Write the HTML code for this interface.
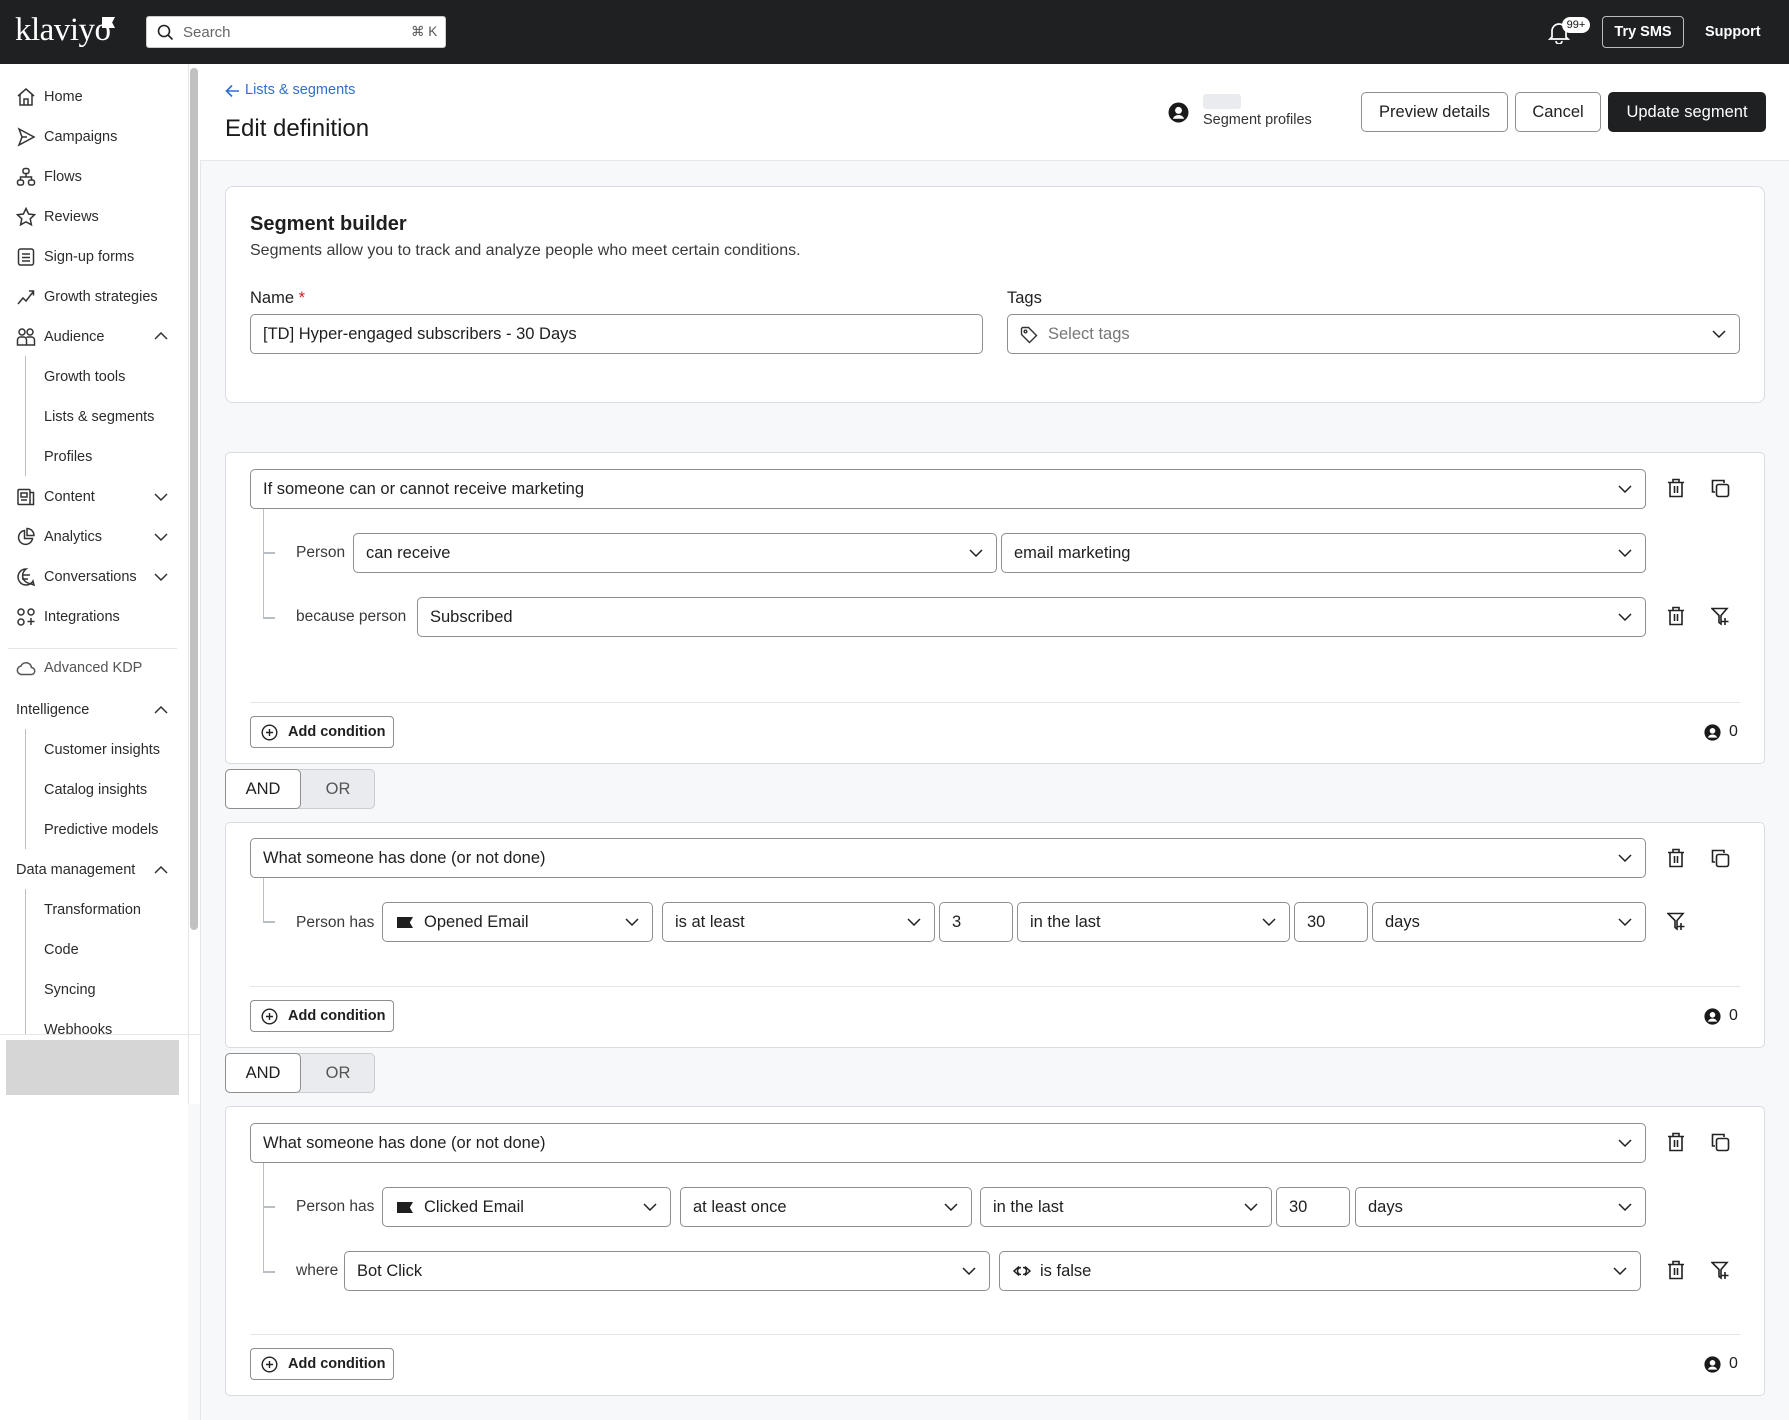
<!DOCTYPE html>
<html><head><meta charset="utf-8"><style>
*{box-sizing:border-box;margin:0;padding:0}
body{width:1789px;height:1420px;overflow:hidden;position:relative;background:#f7f8fa;font-family:"Liberation Sans",Arial,sans-serif;color:#1f1f1f}
.a{position:absolute}
.top{left:0;top:0;width:1789px;height:64px;background:#1f2022}
.side{left:0;top:64px;width:188px;height:1356px;background:#fff}
.sb{left:188px;top:64px;width:12px;height:1040px;background:#fff;border-left:1px solid #e6e6e6}
.thumb{left:190px;top:68px;width:8px;height:862px;background:#c1c1c1;border-radius:4px}
.ni{position:absolute;left:44px;font-size:14.5px;color:#2b2b2b;line-height:18px;margin-top:1px}
.ic{position:absolute;left:16px;margin-top:1px}
.hd{left:200px;top:64px;width:1589px;height:97px;background:#fff;border-bottom:1px solid #e5e7eb}
.card{background:#fff;border:1px solid #d9dce0;border-radius:8px}
.sel{position:absolute;border:1px solid #8e8e8e;border-radius:5px;background:#fff;height:40px;font-size:16.5px;padding-left:12px;line-height:38px;color:#1f1f1f;white-space:nowrap;overflow:hidden}
.sel svg.ch{position:absolute;right:13px;top:15px}
.lbl{position:absolute;font-size:15.5px;color:#3a3a3a;line-height:20px;margin-top:1px}
.btn{position:absolute;border:1px solid #8e8e8e;border-radius:5px;background:#fff;font-size:16.5px;text-align:center}
.add{position:absolute;left:250px;width:144px;height:32px;border:1px solid #8e8e8e;border-radius:4px;background:#fff;font-size:14.5px;font-weight:bold;line-height:30px;padding-left:37px}
.add svg{position:absolute;left:10px;top:7px}
.sep{position:absolute;left:250px;width:1490px;height:1px;background:#e3e5e8}
.cnt{position:absolute;left:1704px;font-size:16px;margin-top:1px}
.cnt svg{position:absolute;left:0;top:1px}
.cnt span{position:absolute;left:25px;top:0}
.ao{position:absolute;left:225px;width:150px;height:40px;border:1px solid #c9ccd1;border-radius:5px;background:#e9ebee;font-size:16.5px}
.ao .and{position:absolute;left:-1px;top:-1px;width:76px;height:40px;background:#fff;border:1px solid #8e8e8e;border-radius:5px;text-align:center;line-height:38px}
.ao .or{position:absolute;left:75px;top:0;width:74px;text-align:center;line-height:38px;color:#555}
.tl{position:absolute;border-left:1.5px solid #b9bec5}
.th{position:absolute;height:1.5px;background:#b9bec5;width:12px}
</style></head><body>

<div class="a top">
  <div class="a" style="left:15px;top:12px;font-family:'Liberation Serif',serif;font-size:33px;color:#fff;letter-spacing:-0.5px">klaviyo</div>
  <div class="a" style="left:102px;top:17px;width:13px;height:11px;background:#fff;clip-path:polygon(0 0,100% 0,78% 50%,100% 100%,0 100%)"></div>
  <div class="a" style="left:146px;top:16px;width:300px;height:32px;background:#fff;border:1px solid #ccc;border-radius:3px">
    <svg class="a" style="left:10px;top:7px" width="17" height="17" viewBox="0 0 17 17"><circle cx="7" cy="7" r="5.5" fill="none" stroke="#222" stroke-width="1.6"/><path d="M11 11l4.5 4.5" stroke="#222" stroke-width="1.6"/></svg>
    <span class="a" style="left:36px;top:7px;font-size:15px;color:#666">Search</span>
    <span class="a" style="left:264px;top:7px;font-size:13.5px;color:#555">⌘ K</span>
  </div>
  <svg class="a" style="left:1548px;top:20px" width="22" height="24" viewBox="0 0 22 24"><path d="M4 17V11a7 7 0 0 1 14 0v6l2 2H2z" fill="none" stroke="#fff" stroke-width="1.7"/><path d="M8 21a3 3 0 0 0 6 0" fill="none" stroke="#fff" stroke-width="1.7"/></svg>
  <div class="a" style="left:1562px;top:17px;width:28px;height:16px;background:#fff;border-radius:8px;font-size:11px;color:#111;text-align:center;line-height:16px">99+</div>
  <div class="a" style="left:1602px;top:16px;width:82px;height:32px;border:1px solid #bbb;border-radius:4px;color:#fff;font-size:14.5px;font-weight:bold;text-align:center;line-height:31px">Try SMS</div>
  <div class="a" style="left:1705px;top:24px;color:#fff;font-size:14.5px;font-weight:bold">Support</div>
</div>

<div class="a side"></div>
<div class="a sb"></div>
<div class="a thumb"></div>
<svg class="ic" style="top:86px" width="20" height="20" viewBox="0 0 20 20" fill="none" stroke="#333" stroke-width="1.5"><path d="M2 9l8-7 8 7M4 7.5V18h12V7.5M8 18v-6h4v6"/></svg>
<div class="ni" style="top:87px">Home</div>
<svg class="ic" style="top:126px" width="20" height="20" viewBox="0 0 20 20" fill="none" stroke="#333" stroke-width="1.5"><path d="M3 2l15 8-15 8 3-8z M6 10h5"/></svg>
<div class="ni" style="top:127px">Campaigns</div>
<svg class="ic" style="top:166px" width="20" height="20" viewBox="0 0 20 20" fill="none" stroke="#333" stroke-width="1.5"><rect x="7" y="1.5" width="6" height="5" rx="2"/><rect x="1.5" y="13" width="6" height="5" rx="2"/><rect x="12.5" y="13" width="6" height="5" rx="2"/><path d="M10 6.5v3M4.5 13v-3h11v3"/></svg>
<div class="ni" style="top:167px">Flows</div>
<svg class="ic" style="top:206px" width="20" height="20" viewBox="0 0 20 20" fill="none" stroke="#333" stroke-width="1.5"><path d="M10 1.5l2.6 5.5 6 .7-4.4 4.1 1.2 6L10 14.8 4.6 17.8l1.2-6L1.4 7.7l6-.7z"/></svg>
<div class="ni" style="top:207px">Reviews</div>
<svg class="ic" style="top:246px" width="20" height="20" viewBox="0 0 20 20" fill="none" stroke="#333" stroke-width="1.5"><rect x="2.5" y="2" width="15" height="16" rx="2"/><path d="M6 7h8M6 10.5h8M6 14h8"/></svg>
<div class="ni" style="top:247px">Sign-up forms</div>
<svg class="ic" style="top:286px" width="20" height="20" viewBox="0 0 20 20" fill="none" stroke="#333" stroke-width="1.5"><path d="M2 17l5-6 3 3 7-9M13 4h4.5v4.5"/></svg>
<div class="ni" style="top:287px">Growth strategies</div>
<svg class="ic" style="top:326px" width="20" height="20" viewBox="0 0 20 20" fill="none" stroke="#333" stroke-width="1.5"><circle cx="6" cy="5" r="3"/><circle cx="14" cy="5" r="3"/><path d="M1.5 18v-5a3 3 0 0 1 3-3h3a3 3 0 0 1 3 3v5zM10.5 10.5a3 3 0 0 1 2-.5h3a3 3 0 0 1 3 3v5h-8"/></svg>
<div class="ni" style="top:327px">Audience</div>
<svg class="a" style="left:154px;top:332px" width="14" height="8" viewBox="0 0 14 8"><path d="M1 7l6-6 6 6" fill="none" stroke="#333" stroke-width="1.5"/></svg>
<div class="tl" style="left:25px;top:356px;height:120px"></div>
<div class="ni" style="top:367px">Growth tools</div>
<div class="ni" style="top:407px">Lists &amp; segments</div>
<div class="ni" style="top:447px">Profiles</div>
<svg class="ic" style="top:486px" width="20" height="20" viewBox="0 0 20 20" fill="none" stroke="#333" stroke-width="1.5"><rect x="2" y="2.5" width="12" height="15" rx="1"/><path d="M14 5.5h3.5v12H14M5 6h6v4H5zM5 13h6"/></svg>
<div class="ni" style="top:487px">Content</div>
<svg class="a" style="left:154px;top:493px" width="14" height="8" viewBox="0 0 14 8"><path d="M1 1l6 6 6-6" fill="none" stroke="#333" stroke-width="1.5"/></svg>
<svg class="ic" style="top:526px" width="20" height="20" viewBox="0 0 20 20" fill="none" stroke="#333" stroke-width="1.5"><path d="M8.5 3.5A7 7 0 1 0 16.5 11.5H8.5z"/><path d="M11 1.5a7 7 0 0 1 7 7h-7z"/></svg>
<div class="ni" style="top:527px">Analytics</div>
<svg class="a" style="left:154px;top:533px" width="14" height="8" viewBox="0 0 14 8"><path d="M1 1l6 6 6-6" fill="none" stroke="#333" stroke-width="1.5"/></svg>
<svg class="ic" style="top:566px" width="20" height="20" viewBox="0 0 20 20" fill="none" stroke="#333" stroke-width="1.5"><path d="M10 2a8 8 0 1 0 7 12l1 4-4-1.5A8 8 0 0 1 10 2z"/><path d="M6 8h8M6 12h6"/></svg>
<div class="ni" style="top:567px">Conversations</div>
<svg class="a" style="left:154px;top:573px" width="14" height="8" viewBox="0 0 14 8"><path d="M1 1l6 6 6-6" fill="none" stroke="#333" stroke-width="1.5"/></svg>
<svg class="ic" style="top:606px" width="20" height="20" viewBox="0 0 20 20" fill="none" stroke="#333" stroke-width="1.5"><rect x="2" y="2" width="6" height="6" rx="3"/><rect x="12" y="2" width="6" height="6" rx="3"/><rect x="2" y="12" width="6" height="6" rx="3"/><path d="M15 11v7M11.5 14.5h7"/></svg>
<div class="ni" style="top:607px">Integrations</div>
<div class="a" style="left:8px;top:648px;width:169px;height:1px;background:#e5e5e5"></div>
<svg class="ic" style="top:657px" width="20" height="20" viewBox="0 0 20 20" fill="none" stroke="#555" stroke-width="1.5"><path d="M5 16.5h10a3.5 3.5 0 0 0 .5-7A5.5 5.5 0 0 0 5 8a4.3 4.3 0 0 0 0 8.5z"/></svg>
<div class="ni" style="top:658px;color:#555">Advanced KDP</div>
<div class="ni" style="left:16px;top:700px">Intelligence</div>
<svg class="a" style="left:154px;top:706px" width="14" height="8" viewBox="0 0 14 8"><path d="M1 7l6-6 6 6" fill="none" stroke="#333" stroke-width="1.5"/></svg>
<div class="tl" style="left:25px;top:729px;height:120px"></div>
<div class="ni" style="top:740px">Customer insights</div>
<div class="ni" style="top:780px">Catalog insights</div>
<div class="ni" style="top:820px">Predictive models</div>
<div class="ni" style="left:16px;top:860px">Data management</div>
<svg class="a" style="left:154px;top:866px" width="14" height="8" viewBox="0 0 14 8"><path d="M1 7l6-6 6 6" fill="none" stroke="#333" stroke-width="1.5"/></svg>
<div class="tl" style="left:25px;top:889px;height:146px"></div>
<div class="ni" style="top:900px">Transformation</div>
<div class="ni" style="top:940px">Code</div>
<div class="ni" style="top:980px">Syncing</div>
<div class="a" style="left:0;top:1020px;width:186px;height:15px;overflow:hidden"><div class="ni" style="top:0">Webhooks</div></div>
<div class="a" style="left:0;top:1034px;width:200px;height:1px;background:#e6e6e6"></div>
<div class="a" style="left:6px;top:1040px;width:173px;height:55px;background:#d6d6d6"></div>
<div class="a" style="left:200px;top:64px;width:1px;height:1356px;background:#e6e6e6"></div>

<div class="a hd"></div>
<svg class="a" style="left:225px;top:84px" width="15" height="14" viewBox="0 0 15 14"><path d="M14 7H2M7 1.5L1.5 7 7 12.5" fill="none" stroke="#2f6fcf" stroke-width="1.6"/></svg>
<div class="a" style="left:245px;top:82px;font-size:14.5px;color:#2f6fcf">Lists &amp; segments</div>
<div class="a" style="left:225px;top:115px;font-size:24px;color:#1a1a1a">Edit definition</div>
<svg class="a" style="left:1168px;top:102px" width="21" height="21" viewBox="0 0 20 20"><circle cx="10" cy="10" r="9.5" fill="#1a1a1a"/><circle cx="10" cy="8" r="3.3" fill="#fff"/><path d="M4.5 16a6 6 0 0 1 11 0" fill="#fff"/></svg>
<div class="a" style="left:1203px;top:94px;width:38px;height:15px;background:#e9ebee;border-radius:3px"></div>
<div class="a" style="left:1203px;top:112px;font-size:14.5px;color:#333">Segment profiles</div>
<div class="btn" style="left:1361px;top:92px;width:147px;height:40px;line-height:39px">Preview details</div>
<div class="btn" style="left:1515px;top:92px;width:86px;height:40px;line-height:39px">Cancel</div>
<div class="btn" style="left:1608px;top:92px;width:158px;height:40px;line-height:39px;background:#1f2022;border-color:#1f2022;color:#fff">Update segment</div>

<div class="a card" style="left:225px;top:186px;width:1540px;height:217px"></div>
<div class="a" style="left:250px;top:213px;font-size:20px;font-weight:bold">Segment builder</div>
<div class="a" style="left:250px;top:242px;font-size:16px;color:#3a3a3a">Segments allow you to track and analyze people who meet certain conditions.</div>
<div class="a" style="left:250px;top:289px;font-size:16.5px">Name<span style="color:#d21c1c"> *</span></div>
<div class="a" style="left:1007px;top:289px;font-size:16.5px">Tags</div>
<div class="sel" style="left:250px;top:314px;width:733px">[TD] Hyper-engaged subscribers - 30 Days</div>
<div class="sel" style="left:1007px;top:314px;width:733px;padding-left:40px;color:#777">
  <svg class="a" style="left:12px;top:11px" width="18" height="18" viewBox="0 0 18 18" fill="none" stroke="#333" stroke-width="1.4"><path d="M1.5 2.5v6l8 8 7-7-8-8h-6z"/><circle cx="5.5" cy="5.5" r="1.3"/></svg>
  Select tags<svg class="ch" width="14" height="8" viewBox="0 0 14 8"><path d="M1 1l6 6 6-6" fill="none" stroke="#222" stroke-width="1.5"/></svg></div>

<div class="a card" style="left:225px;top:452px;width:1540px;height:312px;border-radius:5px"></div>
<div class="sel" style="left:250px;top:469px;width:1396px">If someone can or cannot receive marketing<svg class="ch" width="14" height="8" viewBox="0 0 14 8"><path d="M1 1l6 6 6-6" fill="none" stroke="#222" stroke-width="1.5"/></svg></div>
<div class="tl" style="left:263px;top:509px;height:110px"></div>
<div class="th" style="left:263px;top:552px"></div>
<div class="th" style="left:263px;top:617px"></div>
<div class="lbl" style="left:296px;top:542px">Person</div>
<div class="sel" style="left:353px;top:533px;width:644px">can receive<svg class="ch" width="14" height="8" viewBox="0 0 14 8"><path d="M1 1l6 6 6-6" fill="none" stroke="#222" stroke-width="1.5"/></svg></div>
<div class="sel" style="left:1001px;top:533px;width:645px">email marketing<svg class="ch" width="14" height="8" viewBox="0 0 14 8"><path d="M1 1l6 6 6-6" fill="none" stroke="#222" stroke-width="1.5"/></svg></div>
<div class="lbl" style="left:296px;top:606px">because person</div>
<div class="sel" style="left:417px;top:597px;width:1229px">Subscribed<svg class="ch" width="14" height="8" viewBox="0 0 14 8"><path d="M1 1l6 6 6-6" fill="none" stroke="#222" stroke-width="1.5"/></svg></div>
<div class="sep" style="top:702px"></div>
<div class="add" style="top:716px"><svg width="17" height="17" viewBox="0 0 17 17" fill="none" stroke="#222" stroke-width="1.4"><circle cx="8.5" cy="8.5" r="7.3"/><path d="M8.5 5v7M5 8.5h7"/></svg>Add condition</div>
<div class="cnt" style="top:722px"><svg width="17" height="17" viewBox="0 0 20 20"><circle cx="10" cy="10" r="9.5" fill="#1a1a1a"/><circle cx="10" cy="8" r="3.3" fill="#fff"/><path d="M4.5 16a6 6 0 0 1 11 0" fill="#fff"/></svg><span>0</span></div>

<div class="ao" style="top:769px"><div class="and">AND</div><div class="or">OR</div></div>

<div class="a card" style="left:225px;top:822px;width:1540px;height:226px;border-radius:5px"></div>
<div class="sel" style="left:250px;top:838px;width:1396px">What someone has done (or not done)<svg class="ch" width="14" height="8" viewBox="0 0 14 8"><path d="M1 1l6 6 6-6" fill="none" stroke="#222" stroke-width="1.5"/></svg></div>
<div class="tl" style="left:263px;top:878px;height:45px"></div>
<div class="th" style="left:263px;top:921px"></div>
<div class="lbl" style="left:296px;top:912px">Person has</div>
<div class="sel" style="left:382px;top:902px;width:271px;padding-left:41px"><div class="a" style="left:14px;top:14px;width:16px;height:11px;background:#1f1f1f;clip-path:polygon(0 0,100% 0,80% 50%,100% 100%,0 100%)"></div>Opened Email<svg class="ch" width="14" height="8" viewBox="0 0 14 8"><path d="M1 1l6 6 6-6" fill="none" stroke="#222" stroke-width="1.5"/></svg></div>
<div class="sel" style="left:662px;top:902px;width:273px">is at least<svg class="ch" width="14" height="8" viewBox="0 0 14 8"><path d="M1 1l6 6 6-6" fill="none" stroke="#222" stroke-width="1.5"/></svg></div>
<div class="sel" style="left:939px;top:902px;width:74px">3</div>
<div class="sel" style="left:1017px;top:902px;width:273px">in the last<svg class="ch" width="14" height="8" viewBox="0 0 14 8"><path d="M1 1l6 6 6-6" fill="none" stroke="#222" stroke-width="1.5"/></svg></div>
<div class="sel" style="left:1294px;top:902px;width:74px">30</div>
<div class="sel" style="left:1372px;top:902px;width:274px">days<svg class="ch" width="14" height="8" viewBox="0 0 14 8"><path d="M1 1l6 6 6-6" fill="none" stroke="#222" stroke-width="1.5"/></svg></div>
<div class="sep" style="top:986px"></div>
<div class="add" style="top:1000px"><svg width="17" height="17" viewBox="0 0 17 17" fill="none" stroke="#222" stroke-width="1.4"><circle cx="8.5" cy="8.5" r="7.3"/><path d="M8.5 5v7M5 8.5h7"/></svg>Add condition</div>
<div class="cnt" style="top:1006px"><svg width="17" height="17" viewBox="0 0 20 20"><circle cx="10" cy="10" r="9.5" fill="#1a1a1a"/><circle cx="10" cy="8" r="3.3" fill="#fff"/><path d="M4.5 16a6 6 0 0 1 11 0" fill="#fff"/></svg><span>0</span></div>

<div class="ao" style="top:1053px"><div class="and">AND</div><div class="or">OR</div></div>

<div class="a card" style="left:225px;top:1106px;width:1540px;height:290px;border-radius:5px"></div>
<div class="sel" style="left:250px;top:1123px;width:1396px">What someone has done (or not done)<svg class="ch" width="14" height="8" viewBox="0 0 14 8"><path d="M1 1l6 6 6-6" fill="none" stroke="#222" stroke-width="1.5"/></svg></div>
<div class="tl" style="left:263px;top:1163px;height:110px"></div>
<div class="th" style="left:263px;top:1206px"></div>
<div class="th" style="left:263px;top:1271px"></div>
<div class="lbl" style="left:296px;top:1196px">Person has</div>
<div class="sel" style="left:382px;top:1187px;width:289px;padding-left:41px"><div class="a" style="left:14px;top:14px;width:16px;height:11px;background:#1f1f1f;clip-path:polygon(0 0,100% 0,80% 50%,100% 100%,0 100%)"></div>Clicked Email<svg class="ch" width="14" height="8" viewBox="0 0 14 8"><path d="M1 1l6 6 6-6" fill="none" stroke="#222" stroke-width="1.5"/></svg></div>
<div class="sel" style="left:680px;top:1187px;width:292px">at least once<svg class="ch" width="14" height="8" viewBox="0 0 14 8"><path d="M1 1l6 6 6-6" fill="none" stroke="#222" stroke-width="1.5"/></svg></div>
<div class="sel" style="left:980px;top:1187px;width:292px">in the last<svg class="ch" width="14" height="8" viewBox="0 0 14 8"><path d="M1 1l6 6 6-6" fill="none" stroke="#222" stroke-width="1.5"/></svg></div>
<div class="sel" style="left:1276px;top:1187px;width:74px">30</div>
<div class="sel" style="left:1355px;top:1187px;width:291px">days<svg class="ch" width="14" height="8" viewBox="0 0 14 8"><path d="M1 1l6 6 6-6" fill="none" stroke="#222" stroke-width="1.5"/></svg></div>
<div class="lbl" style="left:296px;top:1260px">where</div>
<div class="sel" style="left:344px;top:1251px;width:646px">Bot Click<svg class="ch" width="14" height="8" viewBox="0 0 14 8"><path d="M1 1l6 6 6-6" fill="none" stroke="#222" stroke-width="1.5"/></svg></div>
<div class="sel" style="left:999px;top:1251px;width:642px;padding-left:40px"><svg class="a" style="left:12px;top:13px" width="20" height="12" viewBox="0 0 20 12" fill="none" stroke="#222" stroke-width="1.5"><path d="M7 1.5L2 6 7 10.5M13 1.5L18 6 13 10.5"/><path d="M9 2.5a3.5 3.5 0 0 0 0 7M11 2.5a3.5 3.5 0 0 1 0 7"/></svg>is false<svg class="ch" width="14" height="8" viewBox="0 0 14 8"><path d="M1 1l6 6 6-6" fill="none" stroke="#222" stroke-width="1.5"/></svg></div>
<div class="sep" style="top:1334px"></div>
<div class="add" style="top:1348px"><svg width="17" height="17" viewBox="0 0 17 17" fill="none" stroke="#222" stroke-width="1.4"><circle cx="8.5" cy="8.5" r="7.3"/><path d="M8.5 5v7M5 8.5h7"/></svg>Add condition</div>
<div class="cnt" style="top:1354px"><svg width="17" height="17" viewBox="0 0 20 20"><circle cx="10" cy="10" r="9.5" fill="#1a1a1a"/><circle cx="10" cy="8" r="3.3" fill="#fff"/><path d="M4.5 16a6 6 0 0 1 11 0" fill="#fff"/></svg><span>0</span></div>

<svg class="a" style="left:1667px;top:478px" width="18" height="20" viewBox="0 0 18 20" fill="none" stroke="#222" stroke-width="1.6"><path d="M1 4.5h16M6 4.5V1.5h6v3M3 4.5V18.5h12V4.5M7.5 8v7M10.5 8v7"/></svg>
<svg class="a" style="left:1667px;top:606px" width="18" height="20" viewBox="0 0 18 20" fill="none" stroke="#222" stroke-width="1.6"><path d="M1 4.5h16M6 4.5V1.5h6v3M3 4.5V18.5h12V4.5M7.5 8v7M10.5 8v7"/></svg>
<svg class="a" style="left:1667px;top:848px" width="18" height="20" viewBox="0 0 18 20" fill="none" stroke="#222" stroke-width="1.6"><path d="M1 4.5h16M6 4.5V1.5h6v3M3 4.5V18.5h12V4.5M7.5 8v7M10.5 8v7"/></svg>
<svg class="a" style="left:1667px;top:1132px" width="18" height="20" viewBox="0 0 18 20" fill="none" stroke="#222" stroke-width="1.6"><path d="M1 4.5h16M6 4.5V1.5h6v3M3 4.5V18.5h12V4.5M7.5 8v7M10.5 8v7"/></svg>
<svg class="a" style="left:1667px;top:1260px" width="18" height="20" viewBox="0 0 18 20" fill="none" stroke="#222" stroke-width="1.6"><path d="M1 4.5h16M6 4.5V1.5h6v3M3 4.5V18.5h12V4.5M7.5 8v7M10.5 8v7"/></svg>
<svg class="a" style="left:1711px;top:479px" width="19" height="19" viewBox="0 0 19 19" fill="none" stroke="#222" stroke-width="1.6"><path d="M4 13H1.5V1.5H13V4"/><rect x="5.5" y="5.5" width="12" height="12" rx="2"/></svg>
<svg class="a" style="left:1711px;top:849px" width="19" height="19" viewBox="0 0 19 19" fill="none" stroke="#222" stroke-width="1.6"><path d="M4 13H1.5V1.5H13V4"/><rect x="5.5" y="5.5" width="12" height="12" rx="2"/></svg>
<svg class="a" style="left:1711px;top:1133px" width="19" height="19" viewBox="0 0 19 19" fill="none" stroke="#222" stroke-width="1.6"><path d="M4 13H1.5V1.5H13V4"/><rect x="5.5" y="5.5" width="12" height="12" rx="2"/></svg>
<svg class="a" style="left:1711px;top:607px" width="19" height="19" viewBox="0 0 19 19" fill="none" stroke="#222" stroke-width="1.6"><path d="M1 1.5h15l-6 7V17l-2-1.5v-7z"/><path d="M14 11v7M10.5 14.5h7"/></svg>
<svg class="a" style="left:1667px;top:912px" width="19" height="19" viewBox="0 0 19 19" fill="none" stroke="#222" stroke-width="1.6"><path d="M1 1.5h15l-6 7V17l-2-1.5v-7z"/><path d="M14 11v7M10.5 14.5h7"/></svg>
<svg class="a" style="left:1711px;top:1261px" width="19" height="19" viewBox="0 0 19 19" fill="none" stroke="#222" stroke-width="1.6"><path d="M1 1.5h15l-6 7V17l-2-1.5v-7z"/><path d="M14 11v7M10.5 14.5h7"/></svg>
</body></html>
